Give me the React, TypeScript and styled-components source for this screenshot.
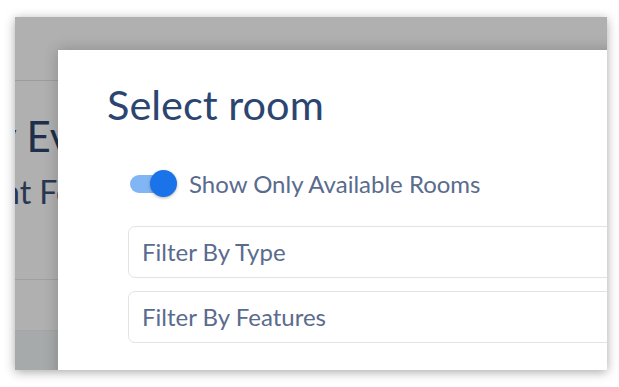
import React from "react";
import styled, { createGlobalStyle } from "styled-components";

const GlobalStyle = createGlobalStyle`
  html, body { margin: 0; padding: 0; background: #ffffff; }
  body { font-family: Lato, "Noto Sans", sans-serif; }
  * { box-sizing: border-box; }
`;

const Screen = styled.div`
  width: 619px;
  height: 387px;
  padding: 17px 0 0 15px;
  background: #ffffff;
`;

const Window = styled.div`
  position: relative;
  width: 592px;
  height: 353px;
  overflow: hidden;
  background: #ffffff;
  box-shadow: 0 2px 10px rgba(0, 0, 0, 0.35);
`;

const Page = styled.div`
  display: flex;
  flex-direction: column;
  height: 100%;
`;

const PageHeader = styled.div`
  height: 64px;
  border-bottom: 1px solid #e4e4e4;
  flex: none;
`;

const Hero = styled.div`
  display: flex;
  flex-direction: column;
  gap: 11px;
  padding-top: 30px;
  height: 199px;
  border-bottom: 1px solid #e8e8e8;
  flex: none;
`;

const HeroTitle = styled.h1`
  margin: 0 0 0 -139px;
  font-size: 42px;
  line-height: 50px;
  font-weight: 400;
  color: #2b4570;
  white-space: nowrap;
`;

const HeroSub = styled.h2`
  margin: 0 0 0 -13px;
  font-size: 32px;
  line-height: 40px;
  font-weight: 400;
  color: #3b5278;
  white-space: nowrap;
`;

const Band = styled.div`
  height: 50px;
  flex: none;
`;

const Footer = styled.div`
  flex: 1;
  background: #f2f6f6;
  border-top: 1px solid #eef0f0;
`;

const Overlay = styled.div`
  position: absolute;
  inset: 0;
  background: rgba(0, 0, 0, 0.31);
`;

const Modal = styled.div`
  position: absolute;
  left: 43px;
  top: 33px;
  width: 640px;
  height: 360px;
  background: #ffffff;
  box-shadow: 0 0 14px rgba(0, 0, 0, 0.22);
  padding: 30px 0 0 49px;
`;

const Title = styled.h2`
  margin: 0;
  font-size: 41.5px;
  line-height: 48px;
  font-weight: 400;
  color: #2b4570;
`;

const Form = styled.div`
  display: flex;
  flex-direction: column;
  margin-top: 42px;
  padding-left: 21px;
`;

const ToggleRow = styled.label`
  display: flex;
  align-items: center;
  gap: 11px;
  margin-left: 2px;
  height: 28px;
`;

const Switch = styled.span`
  position: relative;
  width: 48px;
  height: 28px;
  flex: none;
`;

const Track = styled.span`
  position: absolute;
  left: 0;
  top: 5px;
  width: 40px;
  height: 18px;
  border-radius: 9px;
  background: #82b5f4;
`;

const Knob = styled.span`
  position: absolute;
  left: 20px;
  top: 0;
  width: 27px;
  height: 27px;
  border-radius: 50%;
  background: #1a73e8;
  box-shadow: 0 1px 3px rgba(0, 0, 0, 0.3);
`;

const LabelText = styled.span`
  font-size: 24px;
  line-height: 28px;
  color: #5a6b8d;
`;

const Fields = styled.div`
  display: flex;
  flex-direction: column;
  gap: 13px;
  margin-top: 28px;
`;

const Field = styled.div`
  display: flex;
  align-items: center;
  width: 520px;
  height: 52px;
  padding-left: 13px;
  border: 1px solid #e3e3e3;
  border-radius: 7px;
  font-size: 24px;
  line-height: 28px;
  color: #5a6b8d;
`;

export default function App() {
  return (
    <>
      <GlobalStyle />
      <Screen>
        <Window>
          <Page>
            <PageHeader />
            <Hero>
              <HeroTitle>Holiday Events</HeroTitle>
              <HeroSub>nt Format</HeroSub>
            </Hero>
            <Band />
            <Footer />
          </Page>
          <Overlay />
          <Modal>
            <Title>Select room</Title>
            <Form>
              <ToggleRow>
                <Switch>
                  <Track />
                  <Knob />
                </Switch>
                <LabelText>Show Only Available Rooms</LabelText>
              </ToggleRow>
              <Fields>
                <Field>Filter By Type</Field>
                <Field>Filter By Features</Field>
              </Fields>
            </Form>
          </Modal>
        </Window>
      </Screen>
    </>
  );
}
